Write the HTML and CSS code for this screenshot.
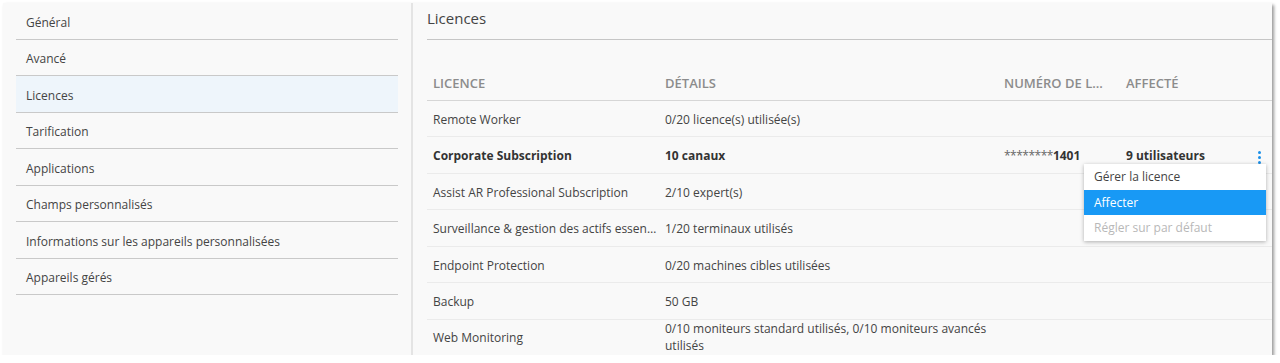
FILE: index.html
```html
<!DOCTYPE html>
<html lang="fr">
<head>
<meta charset="utf-8">
<title>Licences</title>
<link rel="stylesheet" href="styles.css">
</head>
<body>
<div class="window">
  <nav class="sidebar">
    <div class="nav-item">Général</div>
    <div class="nav-item">Avancé</div>
    <div class="nav-item active">Licences</div>
    <div class="nav-item">Tarification</div>
    <div class="nav-item">Applications</div>
    <div class="nav-item">Champs personnalisés</div>
    <div class="nav-item">Informations sur les appareils personnalisées</div>
    <div class="nav-item">Appareils gérés</div>
  </nav>
  <main class="main">
    <h1 class="title">Licences</h1>
    <table class="licences">
      <colgroup>
        <col class="c-name"><col class="c-details"><col class="c-num"><col class="c-assigned"><col class="c-menu">
      </colgroup>
      <thead>
        <tr><th>Licence</th><th>Détails</th><th>Numéro de l...</th><th>Affecté</th><th></th></tr>
      </thead>
      <tbody>
        <tr><td>Remote Worker</td><td>0/20 licence(s) utilisée(s)</td><td></td><td></td><td></td></tr>
        <tr class="strong"><td>Corporate Subscription</td><td>10 canaux</td><td><span class="mask">********</span>1401</td><td>9 utilisateurs</td>
          <td class="menu-cell">
            <span class="kebab"><i></i><i></i><i></i></span>
          </td></tr>
        <tr><td>Assist AR Professional Subscription</td><td>2/10 expert(s)</td><td></td><td></td><td></td></tr>
        <tr><td class="ellipsis">Surveillance &amp; gestion des actifs essentiels</td><td>1/20 terminaux utilisés</td><td></td><td></td><td></td></tr>
        <tr><td>Endpoint Protection</td><td>0/20 machines cibles utilisées</td><td></td><td></td><td></td></tr>
        <tr><td>Backup</td><td>50 GB</td><td></td><td></td><td></td></tr>
        <tr class="tall"><td>Web Monitoring</td><td>0/10 moniteurs standard utilisés, 0/10 moniteurs avancés utilisés</td><td></td><td></td><td></td></tr>
      </tbody>
    </table>
    <ul class="dropdown">
      <li>Gérer la licence</li>
      <li class="selected">Affecter</li>
      <li class="disabled">Régler sur par défaut</li>
    </ul>
  </main>
</div>
</body>
</html>
```
FILE: styles.css
```css
* { box-sizing: border-box; }
html, body { margin: 0; padding: 0; background: #ffffff; }
body {
  font-family: "Open Sans", "Noto Sans", sans-serif;
  font-size: 12px;
  color: #444;
  overflow: hidden;
}
.window {
  margin: 3px 0 0 3px;
  width: 1269px;
  height: 352px;
  background: #f9f9f9;
  box-shadow: 2px 2px 3px rgba(0,0,0,0.4);
  display: flex;
  overflow: hidden;
}
.sidebar {
  width: 410px;
  flex: none;
  padding: 0 13px;
  border-right: 2px solid #e4e4e4;
}
.nav-item {
  height: 36.5px;
  display: flex;
  align-items: center;
  padding: 3px 0 0 10px;
  border-bottom: 1px solid #c9c9c9;
  color: #444;
}
.nav-item.active { background: #eef5fb; }
.main {
  flex: 1;
  position: relative;
  padding-left: 14px;
}
.title {
  margin: 0;
  height: 37px;
  font-size: 15px;
  font-weight: 400;
  color: #444;
  line-height: 30px;
  border-bottom: 1px solid #c6c6c6;
}
.licences {
  margin-top: 26px;
  width: 848px;
  border-collapse: collapse;
  table-layout: fixed;
}
.c-name { width: 232px; }
.c-details { width: 339px; }
.c-num { width: 122px; }
.c-assigned { width: 122px; }
.c-menu { width: 33px; }
th {
  height: 34px;
  text-align: left;
  padding: 1px 6px 0;
  font-size: 13px;
  font-weight: 600;
  color: #8c8c8c;
  text-transform: uppercase;
  border-bottom: 1px solid #d6d6d6;
  white-space: nowrap;
  vertical-align: middle;
}
td {
  height: 36.5px;
  padding: 2px 6px 0;
  border-bottom: 1px solid #ebebeb;
  vertical-align: middle;
  white-space: nowrap;
  color: #444;
}
tr.tall td { white-space: normal; line-height: 17px; padding-top: 0; vertical-align: top; }
tr.tall td:first-child { padding-top: 9px; }
tr.tall td:nth-child(2) { padding-right: 0; }
.ellipsis { overflow: hidden; text-overflow: ellipsis; padding-right: 0; }
tr.strong td { font-weight: 700; color: #333; }
.mask { font-weight: 400; color: #666; letter-spacing: -0.5px; }
.menu-cell { text-align: right; padding-right: 14px; }
.kebab {
  display: inline-flex;
  flex-direction: column;
  gap: 2px;
  vertical-align: middle;
}
.kebab i {
  display: block;
  width: 3px;
  height: 3px;
  border-radius: 50%;
  background: #1a8fe8;
}
.dropdown {
  position: absolute;
  left: 671px;
  top: 161px;
  width: 182px;
  margin: 0;
  padding: 0;
  list-style: none;
  background: #fff;
  box-shadow: 0 1px 4px rgba(0,0,0,0.3);
}
.dropdown li {
  height: 25.6px;
  line-height: 26px;
  padding-left: 10px;
  color: #444;
}
.dropdown li.selected { background: #1899f5; color: #fff; }
.dropdown li.disabled { color: #b8b8b8; }
```
